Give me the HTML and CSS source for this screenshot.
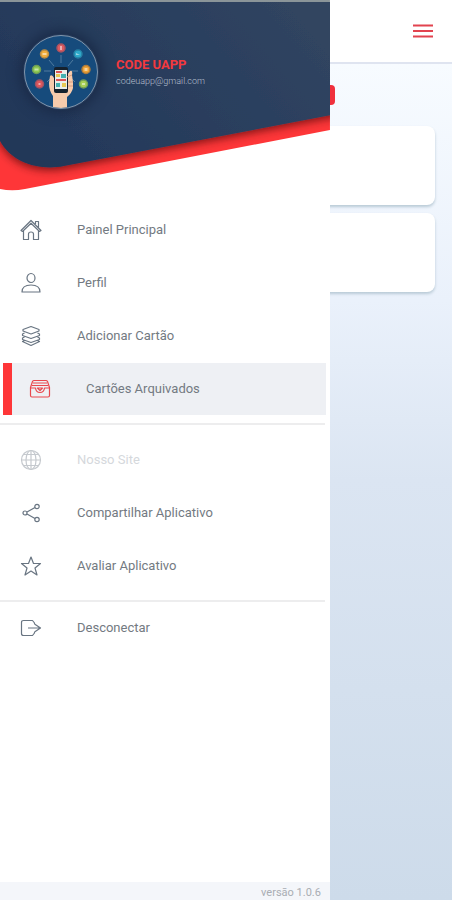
FILE: index.html
```html
<!DOCTYPE html>
<html lang="pt-BR">
<head>
<meta charset="utf-8">
<meta name="viewport" content="width=device-width, initial-scale=1">
<title>Code Uapp</title>
<link rel="stylesheet" href="styles.css">
</head>
<body>
<div class="page">
  <header class="topbar">
    <button class="menu-button" type="button" aria-label="Menu">
      <svg width="22" height="16" viewBox="0 0 22 16"><path d="M1 2.500h20M1 8h20M1 13.500h20" stroke="#e2434f" stroke-width="2"/></svg>
    </button>
  </header>
  <main class="content">
    <div class="tag"></div>
    <div class="card"></div>
    <div class="card"></div>
  </main>
</div>

<aside class="drawer">
  <header class="profile">
    <svg class="profile-shape" viewBox="0 0 330 192" preserveAspectRatio="none" aria-hidden="true">
      <defs>
        <linearGradient id="navy" x1="0" y1="0.6" x2="1" y2="0.2">
          <stop offset="0" stop-color="#223759"/>
          <stop offset="1" stop-color="#314561"/>
        </linearGradient>
        <filter id="shade" x="-10%" y="-10%" width="120%" height="130%">
          <feDropShadow dx="0" dy="3" stdDeviation="4" flood-color="#300" flood-opacity="0.6"/>
        </filter>
      </defs>
      <path d="M0 100H330V130L25 189Q12 191.500 0 189Z" fill="#fe3638"/>
      <path d="M-12 2H342V113L64 166C40 171 12 163 0 141Q-6 130 -12 110Z" fill="url(#navy)" filter="url(#shade)"/>
      <path d="M0 0H330V2H0Z" fill="#8b9599"/>
    </svg>
    <div class="profile-info">
      <svg class="avatar" width="76" height="76" viewBox="0 0 76 76" aria-hidden="true">
        <defs><clipPath id="disc"><circle cx="38" cy="38" r="36"/></clipPath></defs>
        <circle cx="38" cy="38" r="36.500" fill="#164b7c" stroke="#8196ac"/>
        <path d="M38 21v8M26 26l5 6M50 26l-5 6M21 37h7M48 37h7M24 48l6-6M52 48l-6-6" stroke="#507ca0" fill="none"/>
        <g stroke-width="1.500">
          <circle cx="38" cy="14" r="4" fill="#dc5b60" stroke="#a95260"/>
          <circle cx="21.500" cy="20" r="4" fill="#f2ae3b" stroke="#ba8c45"/>
          <circle cx="55" cy="20" r="4" fill="#2ea9ca" stroke="#2780a4"/>
          <circle cx="13.500" cy="35.500" r="4" fill="#8dca50" stroke="#6c9c58"/>
          <circle cx="63" cy="35.500" r="4" fill="#efa436" stroke="#ae7b3c"/>
          <circle cx="16.500" cy="50" r="4" fill="#dc565c" stroke="#9d5264"/>
          <circle cx="60.500" cy="50" r="4" fill="#a8d155" stroke="#74a057"/>
        </g>
        <g fill="#fff" opacity="0.5">
          <path d="M37 12h2v4h-2zM19.500 19h4v2h-4zM53 19l4 2h-4zM11.500 34.500h4v2h-4zM61.500 34h3v3h-3zM15.500 49h2v2h-2zM59 49h3v2h-3z"/>
        </g>
        <g clip-path="url(#disc)">
          <path d="M30 78V62Q26 57 26 49L27 42Q29 40 31 44L44 41L47 37Q50 36 49 41L50 48V54Q49 59 44 63V78Z" fill="#f6cbac"/>
          <rect x="31" y="33" width="14" height="26" rx="2" fill="#16222e"/>
          <rect x="32" y="36" width="12" height="19" fill="#e9eee9"/>
          <path d="M33 37h6v2h-6zM33 45h10v2h-10z" fill="#d95558"/>
          <path d="M38 40h5v4h-5zM33 49h4v4h-4z" fill="#43b2b1"/>
          <path d="M33 40h4v3h-4zM39 49h4v4h-4z" fill="#e7c952"/>
          <path d="M44 43l5-2M45 48h5M45 52h5" stroke="#d89d80"/>
        </g>
      </svg>
      <div class="profile-text">
        <h1 class="profile-name">CODE UAPP</h1>
        <p class="profile-mail">codeuapp@gmail.com</p>
      </div>
    </div>
  </header>

  <nav class="menu">
    <a class="item" href="#">
      <svg class="icon" viewBox="0 0 22 22"><path d="M1 11.500L11 1.500L21 11.500L19.500 12.500L11 4.200L2.500 12.500ZM3.500 12v8.500h5V15q0-2 2.500-2t2.500 2v5.500h5V12M15.500 5V2.500h3v6"/></svg>
      <span>Painel Principal</span>
    </a>
    <a class="item" href="#">
      <svg class="icon" viewBox="0 0 22 22"><ellipse cx="11" cy="6" rx="4" ry="4.500"/><path d="M2 20Q2 13 11 13T20 20Z"/></svg>
      <span>Perfil</span>
    </a>
    <a class="item" href="#">
      <svg class="icon" viewBox="0 0 22 22"><path d="M11 1.500L19 4.500V6L11 9L3 6V4.500ZM4.500 8L2.500 9V10.500L11 13.500L19.500 10.500V9L17.500 8M4.500 12L2.500 13V14.500L11 17.500L19.500 14.500V13L17.500 12M4.500 15.500L2.500 16.500L11 20.500L19.500 16.500L17.500 15.500"/></svg>
      <span>Adicionar Cartão</span>
    </a>
    <a class="item item-active" href="#" aria-current="page">
      <svg class="icon" viewBox="0 0 22 22"><path d="M1.500 9.500L3.500 3.500Q4 2.500 5 2.500H17Q18 2.500 18.500 3.500L20.500 9.500V17.500Q20.500 19 19 19H3Q1.500 19 1.500 17.500ZM4 5h14M3 7.500h16M1.500 10H6.500Q7 14.500 11 14.500T15.500 10H20.500M8.500 10h5L11 12.500Z"/></svg>
      <span>Cartões Arquivados</span>
    </a>
  </nav>
  <hr class="divider">
  <nav class="menu menu-links">
    <a class="item item-disabled" href="#" aria-disabled="true">
      <svg class="icon" viewBox="0 0 22 22"><circle cx="11" cy="11" r="9.500"/><ellipse cx="11" cy="11" rx="5" ry="9.500"/><path d="M11 1.500v19M1.500 11h19M3.500 5.500h15M3.500 16.500h15"/></svg>
      <span>Nosso Site</span>
    </a>
    <a class="item" href="#">
      <svg class="icon" viewBox="0 0 22 22"><circle cx="5" cy="11" r="2"/><circle cx="17" cy="4.500" r="2.200"/><circle cx="17" cy="17.500" r="2.200"/><path d="M7 10L15 5.500M7 12L15 16.500"/></svg>
      <span>Compartilhar Aplicativo</span>
    </a>
    <a class="item" href="#">
      <svg class="icon" viewBox="0 0 22 22"><path d="M11 2L13.500 8.500H20.500L15 13L17 20L11 16L5 20L7 13L1.500 8.500H8.500Z"/></svg>
      <span>Avaliar Aplicativo</span>
    </a>
  </nav>
  <hr class="divider">
  <nav class="menu">
    <a class="item" href="#">
      <svg class="icon" viewBox="0 0 22 22"><path d="M14.500 7V6L12.500 3.500H3.500Q1.500 3.500 1.500 5.500V16.500Q1.500 18.500 3.500 18.500H12.500L14.500 16V15M8 11H20.500M14.500 7L20.500 11L14.500 15"/></svg>
      <span>Desconectar</span>
    </a>
  </nav>
  <footer class="version">versão 1.0.6</footer>
</aside>
</body>
</html>
```
FILE: styles.css
```css
* {
  box-sizing: border-box;
}

body {
  margin: 0;
  font-family: Roboto, "Liberation Sans", sans-serif;
  color: #737a82;
}

.page {
  min-height: 100vh;
  background: linear-gradient(#f7fbff 64px, #eaf1fb 300px, #dbe5f2 480px, #cddbea 100%);
}

.topbar {
  display: flex;
  justify-content: flex-end;
  align-items: center;
  height: 64px;
  padding: 0 18px;
  background: #fff;
  border-bottom: 2px solid #dfe4f0;
}

.menu-button {
  display: flex;
  padding: 0;
  border: 0;
  background: none;
}

.content {
  display: flex;
  flex-direction: column;
  gap: 8px;
  padding: 21px 17px;
}

.tag {
  width: 76%;
  height: 20px;
  margin-bottom: 13px;
  border-radius: 4px;
  background: #f0303c;
}

.card {
  height: 79px;
  border-radius: 8px;
  background: #fff;
  box-shadow: 0 2px 3px #b9cad6;
}

.drawer {
  position: absolute;
  top: 0;
  left: 0;
  display: flex;
  flex-direction: column;
  width: 73%;
  min-height: 100vh;
  background: #fff;
}

.profile {
  display: grid;
  height: 192px;
  margin-bottom: 12px;
}

.profile-shape,
.profile-info {
  grid-area: 1 / 1;
}

.profile-shape {
  width: 100%;
  height: 192px;
}

.profile-info {
  z-index: 1;
  display: flex;
  align-items: center;
  align-self: start;
  gap: 17px;
  padding: 34px 23px;
}

.avatar {
  flex: none;
  border-radius: 50%;
  box-shadow: 0 0 12px 4px #1b2c49;
}

.profile-name {
  margin: 0;
  font-size: 13px;
  line-height: 18px;
  font-weight: 700;
  color: #f3393e;
}

.profile-mail {
  margin: 0;
  font-size: 9px;
  line-height: 14px;
  font-weight: 300;
  color: #b4bfcd;
}

.menu {
  display: flex;
  flex-direction: column;
  gap: 1px;
}

.menu-links {
  margin-top: 9px;
}

.item {
  display: flex;
  align-items: center;
  gap: 35px;
  height: 52px;
  margin: 0 4px 0 3px;
  padding-left: 17px;
  font-size: 13px;
  line-height: 20px;
  color: inherit;
  text-decoration: none;
}

.icon {
  flex: none;
  width: 22px;
  height: 22px;
  fill: none;
  stroke: #697582;
  stroke-width: 1.2;
  stroke-linejoin: round;
}

.item-active {
  border-left: 9px solid #fe3638;
  background: #eef0f4;
}

.item-active .icon {
  stroke: #e9484e;
}

.item-disabled {
  color: #d5d8dc;
}

.item-disabled .icon {
  stroke: #c5c9ce;
}

.divider {
  width: calc(100% - 5px);
  height: 2px;
  margin: 8px 0 0;
  border: 0;
  background: #ededee;
}

.version {
  height: 18px;
  margin-top: auto;
  padding-right: 9px;
  background: #f4f6fa;
  font-size: 11px;
  line-height: 22px;
  text-align: right;
  color: #a9adb3;
}
```
